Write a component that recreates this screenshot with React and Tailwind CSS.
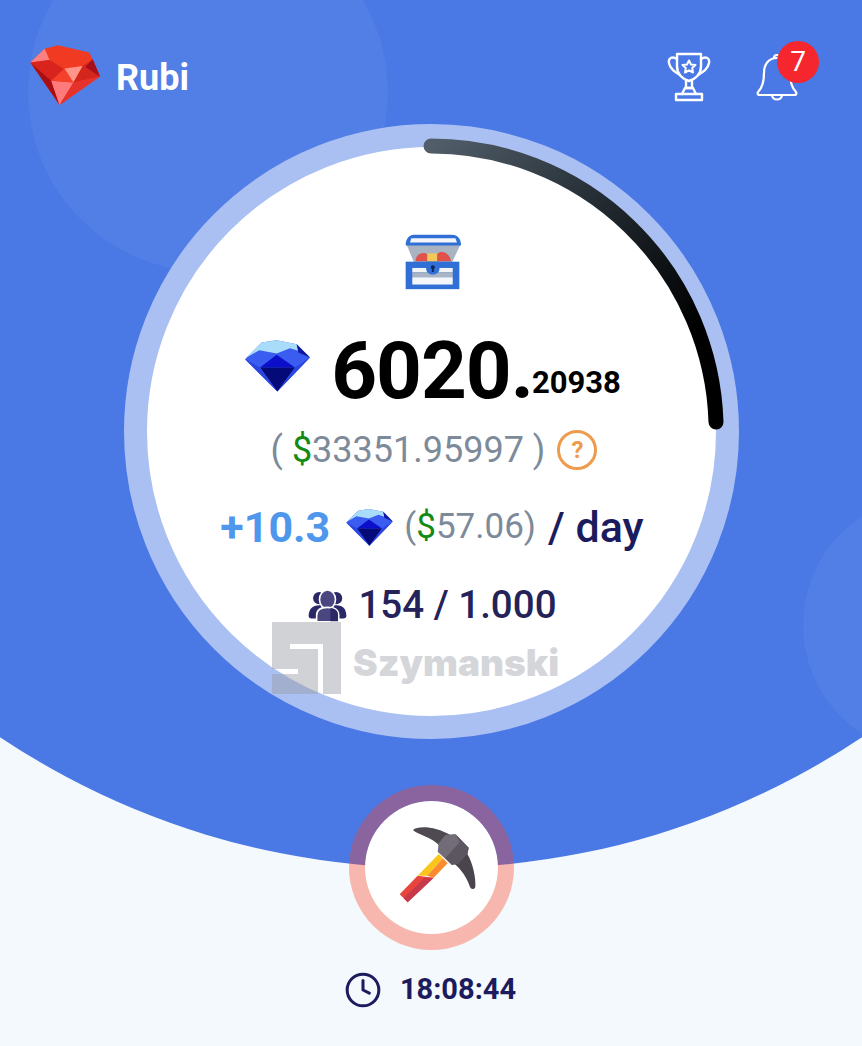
import { Clock } from "lucide-react";

function Ruby() {
  return (
    <svg viewBox="88 74 220 190" className="w-[73px] h-[63px]">
      <path d="M92 130 135 88 175 78 270 100 302 172 180 258Z" fill="#f03a22" />
      <path d="M92 130 135 88 150 122Z" fill="#ff8080" />
      <path d="M92 130 150 122 195 150 155 185Z" fill="#d8241c" />
      <path d="M92 130 155 185 180 258Z" fill="#a80f14" />
      <path d="M155 185 222 190 180 258Z" fill="#ff7a7a" />
      <path d="M195 148 155 185 222 190Z" fill="#f5402a" />
      <path d="M195 148 250 140 222 190Z" fill="#ff9488" />
      <path d="M250 140 280 120 302 172 222 190Z" fill="#d4261c" />
      <path d="M280 120 302 172 258 143Z" fill="#a80f1c" />
      <path d="M222 190 302 172 180 258Z" fill="#e5322a" />
    </svg>
  );
}

function Sapphire({ className }) {
  return (
    <svg viewBox="45 58 195 155" className={className}>
      <path d="M45 115 95 65 140 58 200 70 240 110 142 212Z" fill="#3a5cf0" />
      <path d="M50 110 95 65 140 58 200 70 205 90 180 82 140 98 88 88Z" fill="#a9dcfb" />
      <path d="M200 70 240 110 205 95Z" fill="#10189e" />
      <path d="M140 102 195 140 90 140Z" fill="#0b0fc9" />
      <path d="M90 140H195L142 212Z" fill="#040a78" />
      <path d="M45 115 90 140 142 212Z" fill="#2a45e0" />
      <path d="M240 110 195 140 142 212Z" fill="#2a45e0" />
    </svg>
  );
}

function Trophy() {
  return (
    <svg viewBox="0 0 44 50" className="w-[44px] h-[50px]" fill="none" stroke="#fff" strokeWidth="2.400" strokeLinejoin="round" strokeLinecap="round">
      <path d="M10 2H34V14C34 23 28 27 22 29C16 27 10 23 10 14Z" />
      <path d="M10 7C5 4 1 6 2 11C3 17 8 20 13 23" />
      <path d="M34 7C39 4 43 6 42 11C41 17 36 20 31 23" />
      <path d="M19 29V36H25V29" />
      <path d="M15 42L18 36H26L29 42" />
      <rect x="9" y="42" width="26" height="6" />
      <path strokeWidth="2" d="M22 8.500 24 12.500 28.500 13 25.200 16 26 20.500 22 18.300 18 20.500 18.800 16 15.500 13 20 12.500Z" />
    </svg>
  );
}

function Bell() {
  return (
    <svg viewBox="0 0 42 50" className="w-[42px] h-[50px]" fill="none" stroke="#fff" strokeWidth="2.200" strokeLinejoin="round" strokeLinecap="round">
      <path d="M21 6C12 6 8 13 8 21C8 31 6 36 2 40C1 42 2 43 4 43H38C40 43 41 42 40 40C36 36 34 31 34 21C34 13 30 6 21 6Z" />
      <path d="M18 6C18 2 24 2 24 6" />
      <path d="M16 43C16 49 26 49 26 43" />
    </svg>
  );
}

function Chest() {
  return (
    <svg viewBox="70 40 175 168" className="w-[58px] h-[56px]">
      <path d="M78 72H240L215 125H100Z" fill="#a9b3c2" />
      <path d="M75 74C75 55 85 42 100 42H215C232 42 242 55 242 74Z" fill="#2f6fd6" />
      <path d="M92 52H225L230 65H88Z" fill="#f4f6f9" />
      <path d="M105 122C105 100 125 92 140 100H170C185 85 210 100 212 122Z" fill="#e0524a" />
      <path d="M140 98H170V122H140Z" fill="#f2c75c" />
      <rect x="75" y="123" width="162" height="83" fill="#2f6fd6" />
      <rect x="95" y="142" width="122" height="13" fill="#f1f3f6" />
      <rect x="95" y="155" width="122" height="15" fill="#aab4c3" />
      <rect x="95" y="170" width="122" height="22" fill="#f4f6f9" />
      <path d="M137 123H177V145C177 155 167 162 157 162C147 162 137 155 137 145Z" fill="#2f6fd6" />
      <circle cx="157" cy="140" r="6" fill="#10245c" />
      <rect x="154" y="140" width="6" height="14" fill="#10245c" />
    </svg>
  );
}

function Users() {
  return (
    <svg viewBox="295 288 122 102" className="w-[39px] h-[33px]">
      <circle cx="330" cy="316" r="19" fill="#2a2866" />
      <circle cx="383" cy="316" r="19" fill="#2a2866" />
      <path d="M297 372C297 350 310 338 330 338H384C404 338 415 350 415 372C415 378 410 380 400 380H312C302 380 297 378 297 372Z" fill="#2a2866" />
      <ellipse cx="356" cy="320" rx="25" ry="30" fill="#4a4780" stroke="#fff" strokeWidth="5" />
      <path d="M322 390V370C322 352 335 345 356 345C377 345 391 352 391 370V390Z" fill="#4a4780" stroke="#fff" strokeWidth="5" />
      <path d="M365 388V347C382 349 389 356 389 370V388Z" fill="#2a2866" />
    </svg>
  );
}

function Pickaxe() {
  return (
    <svg viewBox="200 160 240 240" className="w-[80px] h-[80px]">
      <path d="M208 368 262 312 310 318 232 392Z" fill="#e8453c" />
      <path d="M220 380 282 318 310 318 232 392Z" fill="#c9384a" />
      <path d="M262 312 325 247 338 260 290 312Z" fill="#fbc51c" />
      <path d="M290 312 338 260 352 275 310 318Z" fill="#fa8c2f" />
      <path d="M248 175C262 160 320 165 360 190L330 225C305 195 262 190 248 175Z" fill="#4f4a52" />
      <path d="M410 245C428 275 437 320 435 345C433 354 422 354 419 346C410 320 395 295 370 275Z" fill="#4a454d" />
      <path d="M345 190 375 187 415 228 412 245 385 275 365 280 322 240 325 215Z" fill="#716c77" />
      <path d="M375 187 415 228 412 245 385 275 365 280 345 260 388 212Z" fill="#5b5660" />
    </svg>
  );
}

export default function App() {
  return (
    <div className="relative w-[862px] h-[1046px] overflow-hidden bg-[#f4f9fd] font-['Roboto',sans-serif]">
      {/* background shapes */}
      <div className="absolute left-[-344px] top-[-682px] w-[1550px] h-[1550px] rounded-full bg-[#4a78e4]" />
      <div className="absolute left-[28px] top-[-88px] w-[360px] h-[360px] rounded-full bg-[#527fe6]" />
      <div className="absolute left-[803px] top-[495px] w-[260px] h-[260px] rounded-full bg-[#527fe6]" />

      <div className="relative flex flex-col items-center">
        {/* header */}
        <div className="w-full h-[124px] flex items-start justify-between pl-[29px] pr-[64px] pt-[44px]">
          <div className="flex items-center gap-[14px]">
            <Ruby />
            <span className="text-[36px] font-bold text-white mt-[5px]">Rubi</span>
          </div>
          <div className="flex items-start gap-[45px] pt-[8px]">
            <Trophy />
            <div className="relative">
              <Bell />
              <span className="absolute left-[21px] top-[-11px] w-[42px] h-[42px] rounded-full bg-[#f5262e] flex items-center justify-center text-[28px] text-white">7</span>
            </div>
          </div>
        </div>

        {/* main circle */}
        <div className="relative w-[615px] h-[615px] rounded-full bg-white border-[23px] border-[#aac0f3] flex flex-col items-center pt-[87px]">
          <svg viewBox="0 0 615 615" className="absolute left-[-23px] top-[-23px] w-[615px] h-[615px]" fill="none">
            <defs>
              <linearGradient id="arc" x1="300" y1="24" x2="590" y2="300" gradientUnits="userSpaceOnUse">
                <stop offset="0" stopColor="#525f6b" />
                <stop offset="0.45" stopColor="#1f272d" />
                <stop offset="0.8" stopColor="#000" />
              </linearGradient>
            </defs>
            <path d="M307 22A285 285 0 0 1 592 298" stroke="url(#arc)" strokeWidth="15" strokeLinecap="round" />
          </svg>
          <div className="ml-[3px]">
            <Chest />
          </div>
          <div className="flex items-end mt-[36px] h-[90px] ml-[4px]">
            <Sapphire className="w-[65px] h-[52px] mr-[21px] mb-[24px]" />
            <span className="text-[80px] leading-[90px] font-bold tracking-[-1px] text-black">6020.</span>
            <span className="text-[31px] leading-[30px] font-bold text-black mb-[18px] ml-[-1px]">20938</span>
          </div>
          <div className="flex items-center mt-[9px] h-[50px] ml-[6px] text-[36px] text-[#7d8a9a]">
            <span>( <span className="text-[#138a13]">$</span>33351.95997 )</span>
            <span className="ml-[12px] w-[40px] h-[40px] rounded-full border-[3px] border-[#ee9b4d] flex items-center justify-center text-[24px] font-bold text-[#ee9b4d]">?</span>
          </div>
          <div className="flex items-center mt-[27px] h-[50px] ml-[2px]">
            <span className="text-[43px] font-bold text-[#4f97ec]">+10.3</span>
            <Sapphire className="w-[47px] h-[37px] ml-[16px] mr-[11px]" />
            <span className="text-[35px] text-[#7d8a9a]">(<span className="text-[#138a13]">$</span>57.06)</span>
            <span className="text-[43px] font-medium text-[#1c1b5e] ml-[12px]">/ day</span>
          </div>
          <div className="flex items-center mt-[30px] h-[46px] ml-[3px] text-[38.500px] font-medium text-[#242259]">
            <Users />
            <span className="ml-[11px]">154 / 1.000</span>
          </div>
        </div>

        {/* mine button */}
        <div className="mt-[46px] w-[165px] h-[165px] rounded-full bg-white bg-clip-padding border-[16px] border-[#fc4324]/36 flex items-center justify-center">
          <div className="ml-[12px] mb-[6px]">
            <Pickaxe />
          </div>
        </div>

        <div className="flex items-center gap-[18px] mt-[18px] mr-[2px] text-[29px] font-bold text-[#1c1b5e]">
          <Clock className="w-[38px] h-[38px]" strokeWidth={1.900} />
          <span>18:08:44</span>
        </div>
      </div>

      {/* watermark */}
      <div className="absolute left-[272px] top-[622px] flex items-center">
        <svg viewBox="0 0 69 72" className="w-[69px] h-[72px]">
          <path fillRule="evenodd" d="M0 0H69V72H0ZM18 22V27H46V72H51V22ZM0 47V52H26V47Z" fill="#9a9ca4" fillOpacity="0.45" />
        </svg>
        <span className="ml-[12px] mt-[8px] font-['Inter',sans-serif] font-black text-[37px] leading-none text-[#d4d6da]">Szymanski</span>
      </div>
    </div>
  );
}
